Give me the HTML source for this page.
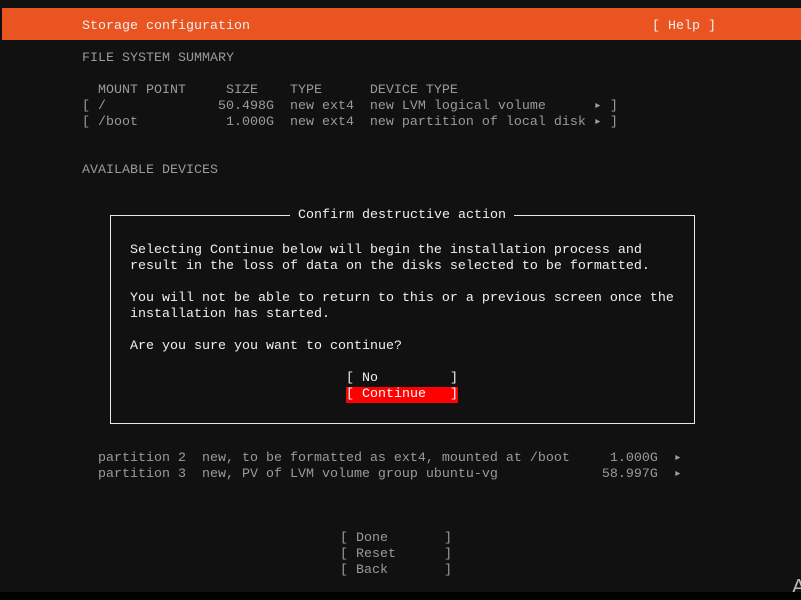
<!DOCTYPE html>
<html><head><meta charset="utf-8"><style>
html,body{margin:0;padding:0;}
body{width:801px;height:600px;background:#111;position:relative;overflow:hidden;font-family:"Liberation Mono","DejaVu Sans Mono",monospace;font-size:13.33px;}
.l{position:absolute;white-space:pre;line-height:16px;height:16px;color:#9a9a9a;margin-top:3px;}
.w{color:#f0f0f0;}
#bar{position:absolute;left:2px;top:8px;width:799px;height:32px;background:#e95420;}
#box{position:absolute;left:110px;top:215px;width:583px;height:207px;border:1px solid #e8e8e8;}
.red{background:#f00;color:#fff;}
#bot{position:absolute;left:0;top:592px;width:801px;height:8px;background:#000;}
</style></head><body>
<div id="bar"></div>
<div class="l w" style="left:82px;top:16px">Storage configuration</div>
<div class="l w" style="left:652px;top:16px">[ Help ]</div>
<div class="l" style="left:82px;top:48px">FILE SYSTEM SUMMARY</div>
<div class="l" style="left:82px;top:80px">  MOUNT POINT     SIZE    TYPE      DEVICE TYPE</div>
<div class="l" style="left:82px;top:96px">[ /              50.498G  new ext4  new LVM logical volume      ▸ ]</div>
<div class="l" style="left:82px;top:112px">[ /boot           1.000G  new ext4  new partition of local disk ▸ ]</div>
<div class="l" style="left:82px;top:160px">AVAILABLE DEVICES</div>
<div id="box"></div>
<div class="l w" style="left:290px;top:208px;background:#111;margin-top:0;padding-top:0;top:207px;height:18px;line-height:18px"> Confirm destructive action </div>
<div class="l w" style="left:130px;top:240px">Selecting Continue below will begin the installation process and</div>
<div class="l w" style="left:130px;top:256px">result in the loss of data on the disks selected to be formatted.</div>
<div class="l w" style="left:130px;top:288px">You will not be able to return to this or a previous screen once the</div>
<div class="l w" style="left:130px;top:304px">installation has started.</div>
<div class="l w" style="left:130px;top:336px">Are you sure you want to continue?</div>
<div class="l w" style="left:346px;top:368px">[ No         ]</div>
<div class="l red" style="left:346px;top:384px;width:112px">[ Continue   ]</div>
<div class="l" style="left:98px;top:448px">partition 2  new, to be formatted as ext4, mounted at /boot     1.000G  ▸</div>
<div class="l" style="left:98px;top:464px">partition 3  new, PV of LVM volume group ubuntu-vg             58.997G  ▸</div>
<div class="l" style="left:340px;top:528px">[ Done       ]</div>
<div class="l" style="left:340px;top:544px">[ Reset      ]</div>
<div class="l" style="left:340px;top:560px">[ Back       ]</div>
<div class="l" style="left:792px;top:574px;color:#bbb;font-family:'Liberation Sans',sans-serif;font-size:20px;line-height:20px;height:20px">A</div>
<div id="bot"></div>
</body></html>
